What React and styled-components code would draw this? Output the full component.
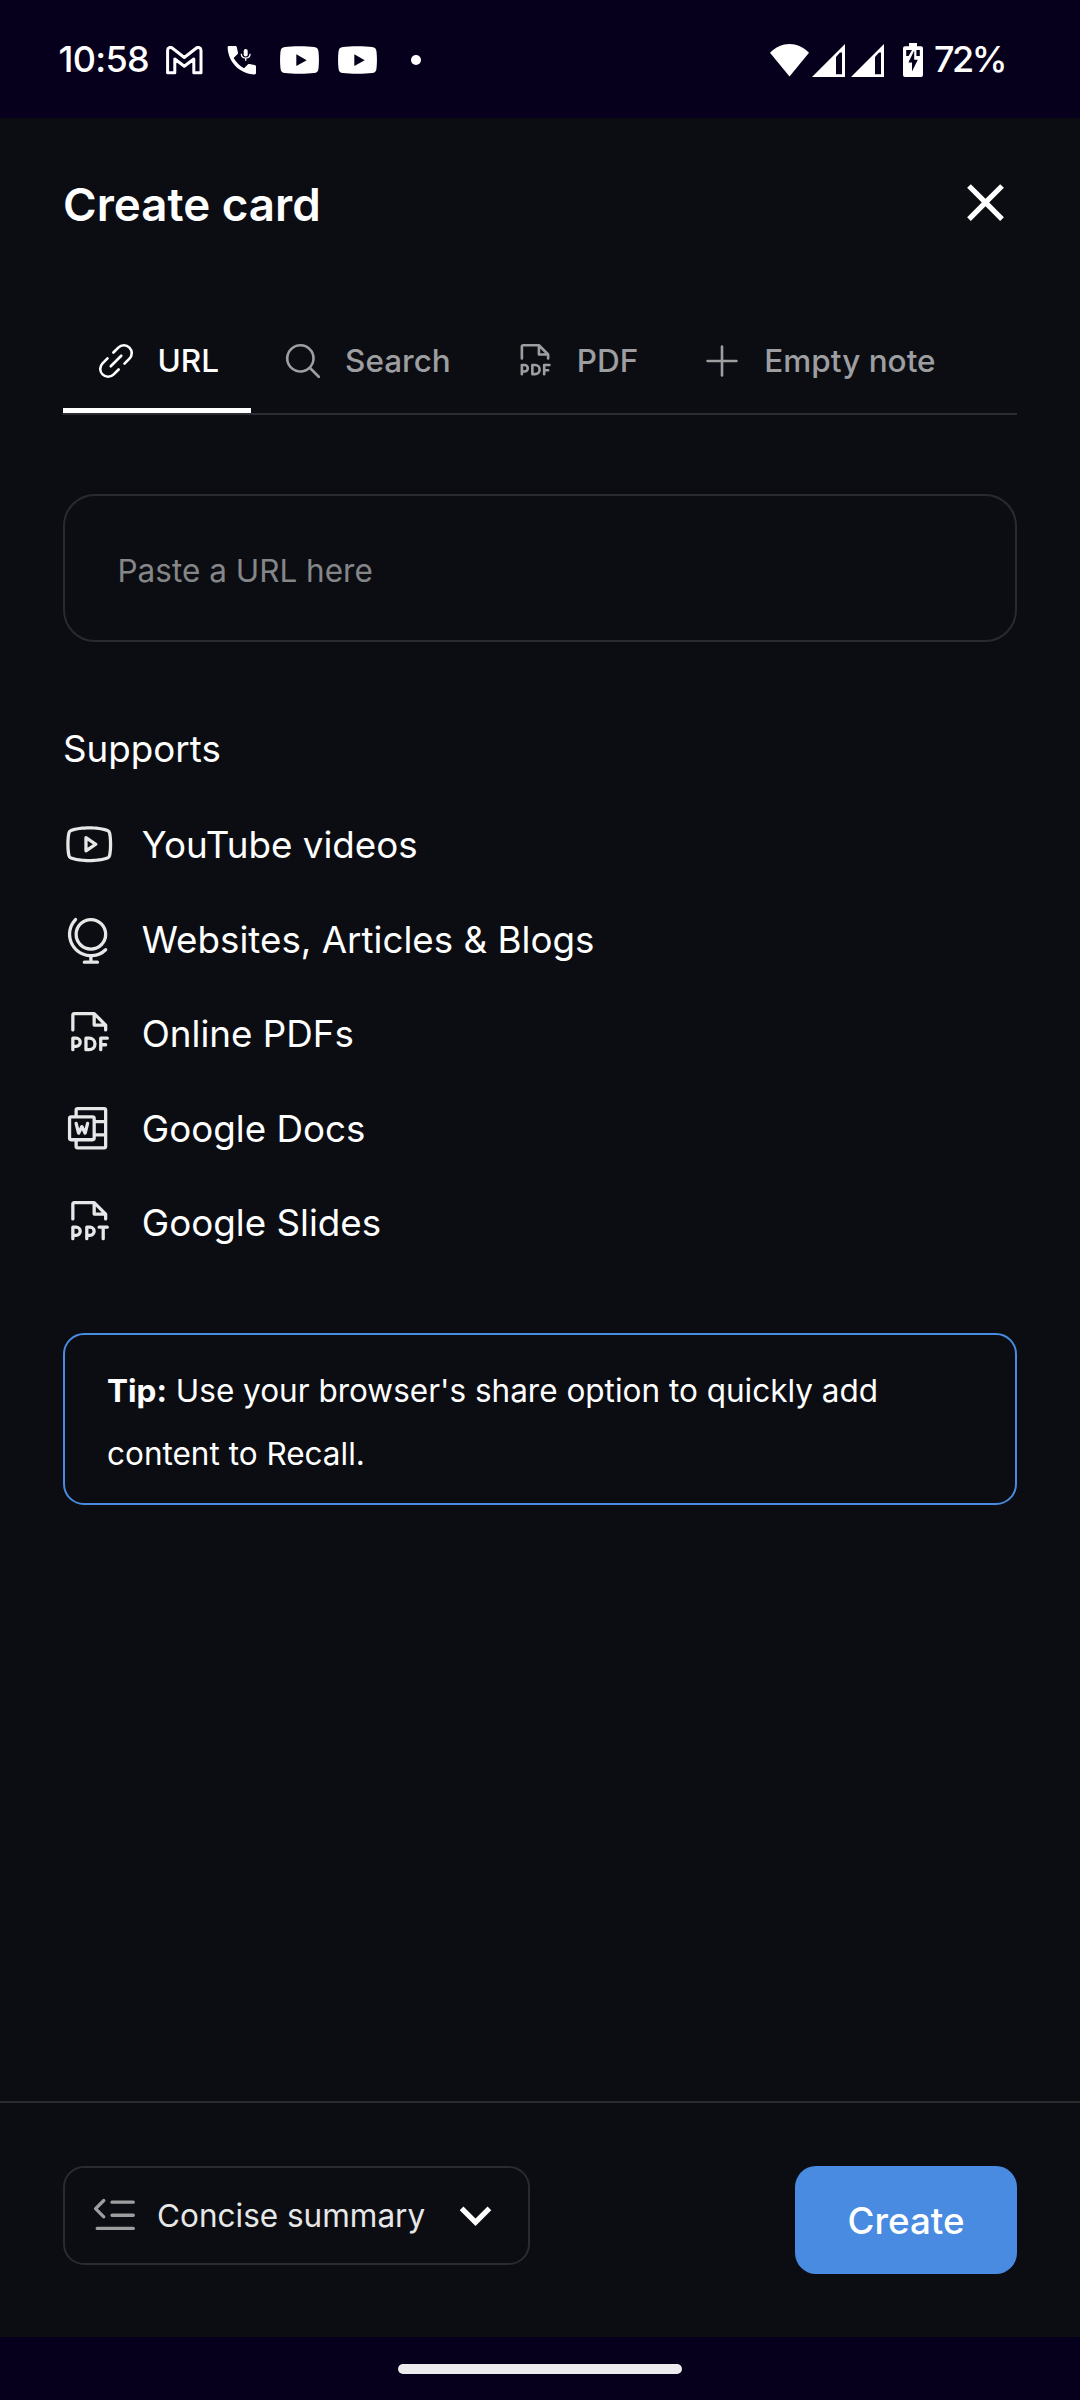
import React from 'react';
import styled, { createGlobalStyle } from 'styled-components';
import {
  PiLinkSimple,
  PiMagnifyingGlass,
  PiFilePdf,
  PiPlus,
  PiYoutubeLogo,
  PiGlobeStand,
  PiMicrosoftWordLogo,
  PiFilePpt,
  PiTextOutdent,
} from 'react-icons/pi';

const GlobalStyle = createGlobalStyle`
  * { box-sizing: border-box; }
  body { margin: 0; background: #0b0d12; }
  button, input { font: inherit; color: inherit; background: none; border: 0; padding: 0; margin: 0; }
  svg { display: block; flex: none; }
`;

const Screen = styled.div`
  width: 1080px;
  height: 2400px;
  display: flex;
  flex-direction: column;
  overflow: hidden;
  background: #0b0d12;
  color: #fff;
  font-family: Inter, "Liberation Sans", sans-serif;
  font-optical-sizing: none;
`;

const StatusBar = styled.header`
  height: 118px;
  flex: none;
  display: flex;
  justify-content: space-between;
  padding: 30px 76px 28px 58.5px;
  background: #06001d;
`;

const StatusGroup = styled.div`
  display: flex;
  align-items: center;
  height: 60px;
`;

const StatusText = styled.span`
  width: ${(p) => p.$width}px;
  margin-left: ${(p) => p.$gap || 0}px;
  padding-bottom: 1px;
  font-weight: 500;
  font-size: 36px;
  line-height: 59px;
  letter-spacing: ${(p) => p.$spacing}px;
  white-space: nowrap;
`;

const StatusIcon = styled.svg`
  margin-left: ${(p) => p.$gap}px;
`;

const TitleRow = styled.div`
  height: 174px;
  flex: none;
  display: flex;
  align-items: center;
  justify-content: space-between;
  padding: 0 63px;
`;

const Title = styled.h1`
  margin: 0;
  font-size: 45.7px;
  font-weight: 600;
  line-height: 60px;
`;

const CloseButton = styled.button`
  display: flex;
  padding-bottom: 5px;
`;

const Main = styled.main`
  flex: 1;
  display: flex;
  flex-direction: column;
  padding: 14px 63px 0;
`;

const Tabs = styled.nav`
  height: 109px;
  display: flex;
  border-bottom: 2px solid #2b2d31;
`;

const Tab = styled.button`
  height: 107px;
  display: flex;
  align-items: center;
  gap: 21px;
  padding: 7px 31.5px 0;
  border-bottom: 5px solid ${(p) => (p.$active ? '#fff' : 'transparent')};
  color: ${(p) => (p.$active ? '#fff' : '#9d9ea0')};
  font-size: 31.5px;
  font-weight: 500;
  line-height: 40px;
  white-space: nowrap;
`;

const UrlInput = styled.input`
  && {
    height: 148px;
    margin-top: 79px;
    padding: 4px 52.5px 0;
    border: 2px solid #292b2f;
    border-radius: 32px;
    font-size: 31.5px;
    outline: none;
  }
  &::placeholder {
    color: #858688;
    opacity: 1;
  }
`;

const SectionLabel = styled.h2`
  margin: 82px 0 0;
  font-size: 36.75px;
  font-weight: 400;
  line-height: 50px;
`;

const SupportList = styled.ul`
  list-style: none;
  margin: 23.5px 0 0;
  padding: 0;
`;

const SupportItem = styled.li`
  height: 94.5px;
  display: flex;
  align-items: center;
  gap: 26.25px;
  font-size: 36.75px;
  white-space: nowrap;

  svg {
    margin-bottom: 0.5px;
    color: #e7e7e8;
  }
`;

const Tip = styled.p`
  margin: 62.5px 0 0;
  height: 172px;
  padding: 24px 42px 0;
  border: 2px solid #488be0;
  border-radius: 21px;
  font-size: 31.5px;
  line-height: 63px;

  strong { font-weight: 700; }
`;

const Footer = styled.footer`
  height: 236px;
  flex: none;
  display: flex;
  justify-content: space-between;
  align-items: flex-start;
  padding: 63px 63px 0;
  border-top: 2px solid #292b2f;
`;

const SummarySelect = styled.button`
  && {
    width: 467px;
    height: 99px;
    display: flex;
    align-items: center;
    padding: 0 21px 0 24px;
    border: 2px solid #292b2f;
    border-radius: 21px;
    font-size: 31.5px;
    color: #e7e7e8;
  }
`;

const SelectLabel = styled.span`
  flex: 1;
  margin-left: 15.5px;
  text-align: left;
  white-space: nowrap;
`;

const CreateButton = styled.button`
  && {
    width: 222px;
    height: 108px;
    border-radius: 21px;
    background: #488be0;
    font-size: 36.75px;
    font-weight: 500;
  }
`;

const NavBar = styled.div`
  height: 63px;
  flex: none;
  display: flex;
  justify-content: center;
  padding-top: 27px;
  background: #06001d;
`;

const NavPill = styled.div`
  width: 284px;
  height: 10px;
  border-radius: 5px;
  background: #ececee;
`;

const GmailIcon = () => (
  <StatusIcon $gap={19} width="37" height="29" viewBox="0 0 37 29" fill="none" stroke="#fff" strokeWidth="3" strokeLinejoin="round">
    <path d="M1.6 4.5C1.6 1.6 4.4.6 6.5 2.2L18.3 11.5 30.1 2.2C32.2.6 35 1.6 35 4.5V26.7H27.8V13L18.3 20.3 8.8 13V26.7H1.6Z" />
  </StatusIcon>
);

const CallIcon = () => (
  <StatusIcon $gap={24} width="30" height="30" viewBox="0 0 30 30" fill="#fff">
    <path d="M2 1H8.3C9.2 1 9.7 1.6 9.9 2.5L11 7.7C11.1 8.4 10.9 8.9 10.4 9.3L6.6 13C9.2 17.4 12.5 20.7 17 23.2L20.8 19.5C21.2 19 21.7 18.9 22.4 19L27.6 20.1C28.5 20.3 29 20.8 29 21.7V28C29 28.8 28.4 29.4 27.5 29.4C12.5 28.8 1.2 17.2.6 2.5C.6 1.6 1.1 1 2 1Z" />
    <rect x="16.7" y="4" width="4" height="7.5" rx="2" />
    <path d="M14.3 8.8C14.4 14.5 23 14.5 23.1 8.8M18.7 13V15.8" fill="none" stroke="#fff" strokeWidth="1.3" />
  </StatusIcon>
);

const YoutubeIcon = ({ gap }) => (
  <StatusIcon $gap={gap} width="39" height="28" viewBox="0 0 39 28">
    <path d="M5 .9C12 0 27 0 34 .9 37 1.3 38.2 2.5 38.5 5.5 39.1 11 39.1 17 38.5 22.5 38.2 25.5 37 26.7 34 27.1 27 28 12 28 5 27.1 2 26.7.8 25.5.5 22.5-.1 17-.1 11 .5 5.5.8 2.5 2 1.3 5 .9Z" fill="#fff" />
    <path d="M16.3 8.3V20L26.7 14.2Z" fill="#06001d" />
  </StatusIcon>
);

const OverflowDot = () => (
  <StatusIcon $gap={34} width="10" height="10" viewBox="0 0 10 10">
    <circle cx="5" cy="5" r="5" fill="#fff" />
  </StatusIcon>
);

const WifiIcon = () => (
  <StatusIcon $gap={0} width="39" height="33" viewBox="0 0 39 33">
    <path d="M0 8.7C11-2.9 28-2.9 39 8.7L19.5 32.5Z" fill="#fff" />
  </StatusIcon>
);

const SignalIcon = ({ gap }) => (
  <StatusIcon $gap={gap} width="33" height="33" viewBox="0 0 33 33">
    <path d="M0 33 33 0V33ZM24 13V30.3H30V8.6H28Z" fill="#fff" fillRule="evenodd" />
  </StatusIcon>
);

const BatteryIcon = () => (
  <StatusIcon $gap={19} width="20" height="34" viewBox="0 0 20 34">
    <path d="M6 0H14V3.3H18A2 2 0 0 1 20 5.3V32A2 2 0 0 1 18 34H2A2 2 0 0 1 0 32V5.3A2 2 0 0 1 2 3.3H6Z" fill="#fff" />
    <path d="M3.2 7H9L5.6 13H3.2ZM13.4 7H16.8V13H13.4ZM11.2 7.5 5.4 19.6H9V28.5L14.8 16.8H11.2Z" fill="#06001d" />
  </StatusIcon>
);

const CloseIcon = () => (
  <svg width="63" height="63" viewBox="0 0 24 24" fill="#fff">
    <path d="M19 6.41 17.59 5 12 10.59 6.41 5 5 6.41 10.59 12 5 17.59 6.41 19 12 13.41 17.59 19 19 17.59 13.41 12z" />
  </svg>
);

const ChevronIcon = () => (
  <svg width="63" height="63" viewBox="0 0 24 24" fill="#fff">
    <path d="M7.41 8.59 12 13.17l4.59-4.58L18 10l-6 6-6-6 1.41-1.41z" />
  </svg>
);

const tabs = [
  { label: 'URL', Icon: PiLinkSimple, active: true },
  { label: 'Search', Icon: PiMagnifyingGlass },
  { label: 'PDF', Icon: PiFilePdf },
  { label: 'Empty note', Icon: PiPlus },
];

const sources = [
  { label: 'YouTube videos', Icon: PiYoutubeLogo },
  { label: 'Websites, Articles & Blogs', Icon: PiGlobeStand },
  { label: 'Online PDFs', Icon: PiFilePdf },
  { label: 'Google Docs', Icon: PiMicrosoftWordLogo },
  { label: 'Google Slides', Icon: PiFilePpt },
];

export default function App() {
  return (
    <>
      <GlobalStyle />
      <Screen>
        <StatusBar>
          <StatusGroup>
            <StatusText $width={88.5} $spacing={-0.7}>10:58</StatusText>
            <GmailIcon />
            <CallIcon />
            <YoutubeIcon gap={23} />
            <YoutubeIcon gap={19} />
            <OverflowDot />
          </StatusGroup>
          <StatusGroup>
            <WifiIcon />
            <SignalIcon gap={3.5} />
            <SignalIcon gap={6} />
            <BatteryIcon />
            <StatusText $width={70} $gap={11} $spacing={-2.5}>72%</StatusText>
          </StatusGroup>
        </StatusBar>

        <TitleRow>
          <Title>Create card</Title>
          <CloseButton aria-label="Close">
            <CloseIcon />
          </CloseButton>
        </TitleRow>

        <Main>
          <Tabs>
            {tabs.map(({ label, Icon, active }) => (
              <Tab key={label} $active={active}>
                <Icon size={42} />
                {label}
              </Tab>
            ))}
          </Tabs>
          <UrlInput placeholder="Paste a URL here" />
          <SectionLabel>Supports</SectionLabel>
          <SupportList>
            {sources.map(({ label, Icon }) => (
              <SupportItem key={label}>
                <Icon size={52.5} />
                {label}
              </SupportItem>
            ))}
          </SupportList>
          <Tip>
            <strong>Tip:</strong> Use your browser's share option to quickly add content to Recall.
          </Tip>
        </Main>

        <Footer>
          <SummarySelect>
            <PiTextOutdent size={52.5} color="#9d9ea0" />
            <SelectLabel>Concise summary</SelectLabel>
            <ChevronIcon />
          </SummarySelect>
          <CreateButton>Create</CreateButton>
        </Footer>

        <NavBar>
          <NavPill />
        </NavBar>
      </Screen>
    </>
  );
}
